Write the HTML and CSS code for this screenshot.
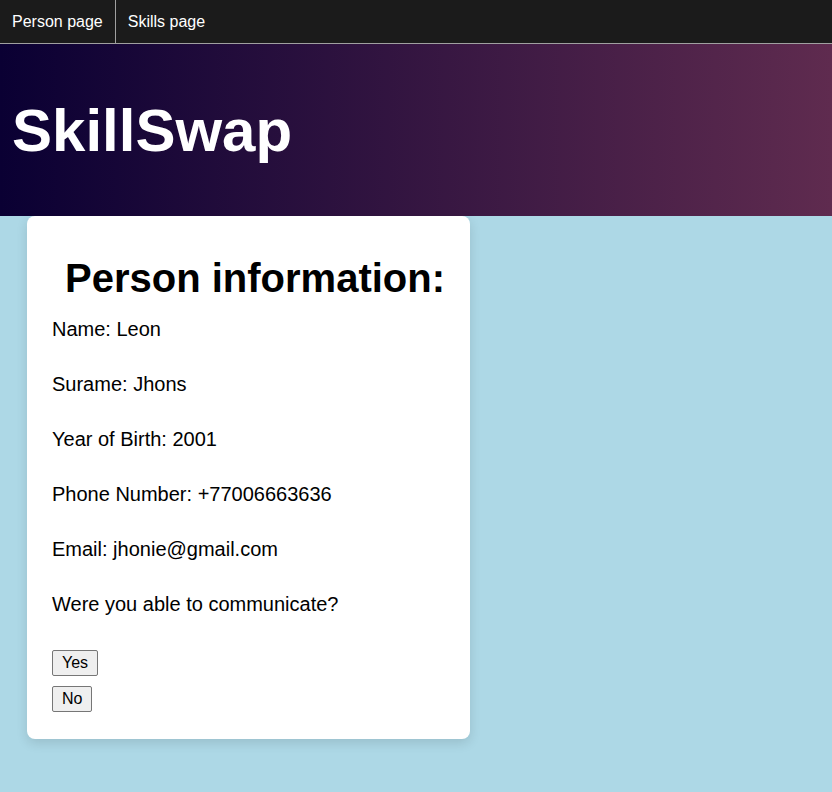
FILE: index.html
```html
<!DOCTYPE html>
<html lang="en">
<head>
<meta charset="utf-8">
<title>SkillSwap</title>
<link rel="stylesheet" href="styles.css">
</head>
<body>
<nav class="topnav">
  <a class="nav-link" href="#">Person page</a>
  <a class="nav-link" href="#">Skills page</a>
</nav>
<header class="hero">
  <h1 class="hero-title">SkillSwap</h1>
</header>
<main class="content">
  <section class="card">
    <h2 class="card-title">Person information:</h2>
    <p class="field">Name: Leon</p>
    <p class="field">Surame: Jhons</p>
    <p class="field">Year of Birth: 2001</p>
    <p class="field">Phone Number: +77006663636</p>
    <p class="field">Email: jhonie@gmail.com</p>
    <p class="field question">Were you able to communicate?</p>
    <div class="actions">
      <button class="btn" type="button">Yes</button>
      <button class="btn" type="button">No</button>
    </div>
  </section>
</main>
</body>
</html>
```
FILE: styles.css
```css
* { box-sizing: border-box; }
html, body {
  margin: 0;
  padding: 0;
}
body {
  background: #add8e6;
  font-family: "Liberation Sans", Arial, sans-serif;
  color: #000;
  min-height: 792px;
}
.topnav {
  display: flex;
  height: 44px;
  background: #1b1b1b;
  border-bottom: 1px solid #a0a0a0;
}
.nav-link {
  display: flex;
  align-items: center;
  padding: 0 12px;
  color: #fff;
  text-decoration: none;
  font-size: 16px;
  border-right: 1px solid #a0a0a0;
}
.nav-link:last-child { border-right: none; }
.hero {
  height: 172px;
  display: flex;
  align-items: center;
  padding-left: 12px;
  background: linear-gradient(to right, #0a0033, #5f2b4f);
}
.hero-title {
  margin: 0;
  color: #fff;
  font-size: 60px;
  font-weight: bold;
  line-height: 69px;
}
.content {
  padding: 0 0 52px 27px;
}
.card {
  width: 443px;
  background: #fff;
  border-radius: 8px;
  padding: 39px 25px 27px;
  box-shadow: 0 4px 12px rgba(0, 0, 0, 0.12);
}
.card-title {
  margin: 0 0 17px;
  padding-left: 13px;
  font-size: 40px;
  line-height: 46px;
  font-weight: bold;
  white-space: nowrap;
}
.field {
  margin: 0 0 32px;
  font-size: 20px;
  line-height: 23px;
}
.field.question { margin-bottom: 34px; }
.actions {
  display: flex;
  flex-direction: column;
  align-items: flex-start;
  gap: 10px;
}
.btn {
  font-family: "Liberation Sans", Arial, sans-serif;
  font-size: 16px;
  line-height: 18px;
  padding: 3px 9px;
  color: #000;
  background: #efefef;
  border: 1px solid #767676;
  border-radius: 2px;
}
```
